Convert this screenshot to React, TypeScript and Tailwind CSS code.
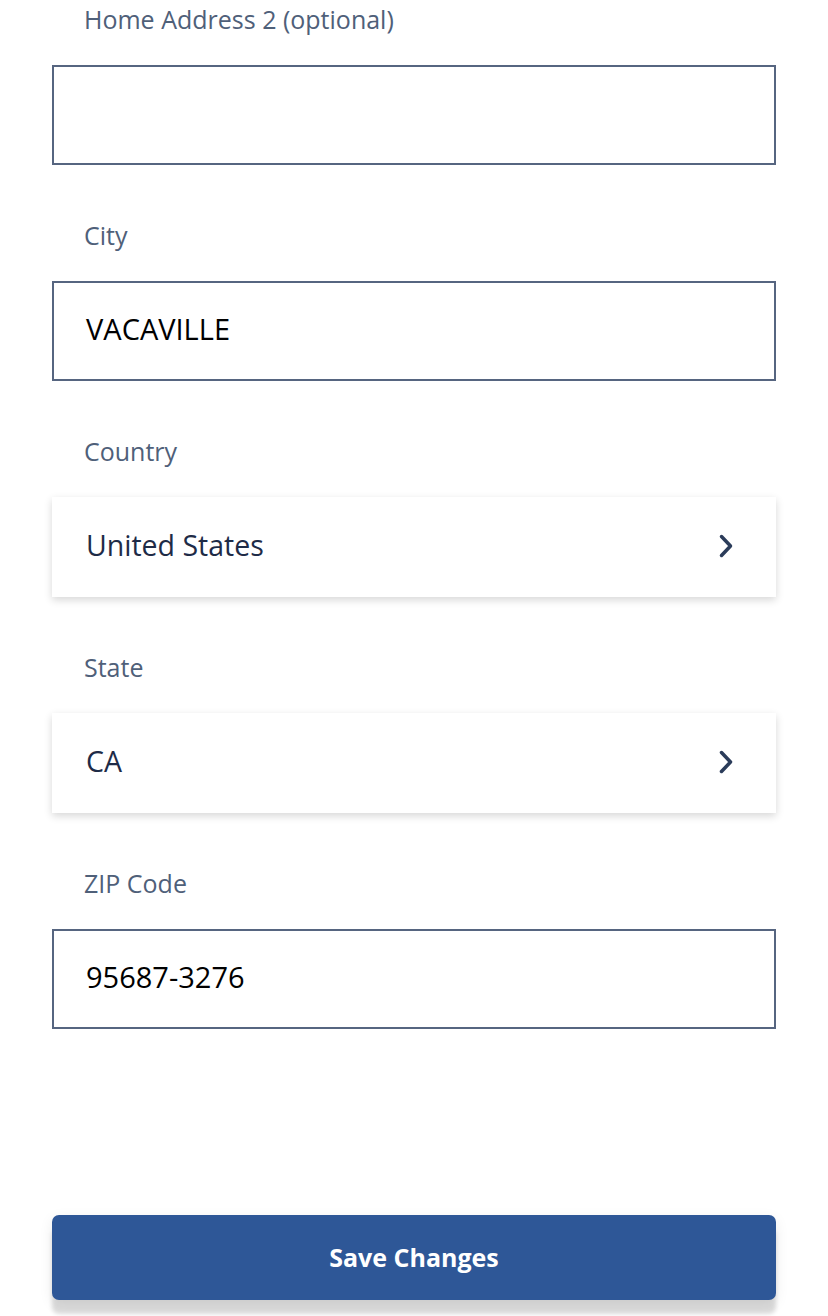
import React from 'react';

const labelCls =
  "h-[40px] pl-[32px] mb-[24px] text-[25px] leading-[36px] text-[#4f6079]";

const TextField: React.FC<{ label: string; value?: string }> = ({ label, value }) => (
  <div>
    <div className={labelCls}>{label}</div>
    <div className="h-[100px] border-2 border-[#566580] bg-white flex items-center pl-[32px] pb-[5px] text-[29px] text-black">
      {value}
    </div>
  </div>
);

const SelectField: React.FC<{ label: string; value: string }> = ({ label, value }) => (
  <div>
    <div className={labelCls}>{label}</div>
    <div className="h-[100px] bg-white flex items-center justify-between pl-[34px] pr-[40px] pb-[3px] text-[28.5px] text-[#1e2b47] shadow-[0_3px_8px_rgba(0,0,0,0.16)]">
      <span>{value}</span>
      <svg width="20" height="26" viewBox="0 0 20 26" fill="none">
        <path d="M5.5 3.5 L14.5 13 L5.5 22.5" stroke="#2b3c5a" strokeWidth="3.5" strokeLinecap="round" strokeLinejoin="round" />
      </svg>
    </div>
  </div>
);

export default function App() {
  return (
    <div className="min-h-[1316px] bg-white flex flex-col px-[52px] font-['Open_Sans',sans-serif] overflow-hidden">
      <div className="flex flex-col gap-[52px] pt-[1px]">
        <TextField label="Home Address 2 (optional)" />
        <TextField label="City" value="VACAVILLE" />
        <SelectField label="Country" value="United States" />
        <SelectField label="State" value="CA" />
        <TextField label="ZIP Code" value="95687-3276" />
      </div>

      {/* Footer action */}
      <div className="mt-auto pb-[16px]">
        <button className="w-full h-[85px] rounded-[7px] bg-[#2e5797] text-white text-[25px] font-bold shadow-[0_14px_4px_rgba(0,0,0,0.14),0_4px_14px_rgba(0,0,0,0.08)]">
          Save Changes
        </button>
      </div>
    </div>
  );
}
